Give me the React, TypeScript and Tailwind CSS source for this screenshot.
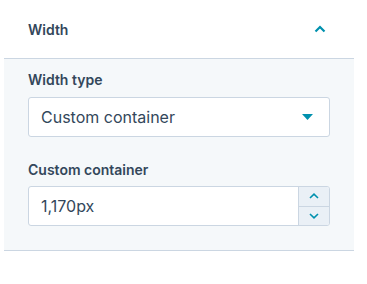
export default function App() {
  return (
    <div className="min-h-screen bg-white pl-1 text-[#33475b]" style={{ fontFamily: 'Inter, "Open Sans", sans-serif' }}>
      <div className="w-[350px]">
        {/* Header */}
        <div className="flex h-[59px] items-center justify-between border-b border-[#cbd6e2] pl-6 pr-[28px]">
          <span className="text-[14px] font-semibold">Width</span>
          <svg width="12" height="8" viewBox="0 0 12 8" className="text-[#0091ae]">
            <path d="M1.5 6.5 L6 2 L10.5 6.5" fill="none" stroke="currentColor" strokeWidth="2.2" />
          </svg>
        </div>

        {/* Body */}
        <div className="border-b border-[#cbd6e2] bg-[#f5f8fa] px-6 pb-6 pt-[11px]">
          <label className="block text-[14px] font-semibold leading-5">Width type</label>
          <div className="mt-[7px] flex h-10 items-center justify-between rounded-[3px] border border-[#cbd6e2] bg-white pl-3 pr-4">
            <span className="text-[16px]">Custom container</span>
            <svg width="11" height="6" viewBox="0 0 11 6" className="text-[#0091ae]">
              <path d="M0 0 H11 L5.5 6 Z" fill="currentColor" />
            </svg>
          </div>

          <label className="mt-[23px] block text-[14px] font-semibold leading-5">Custom container</label>
          <div className="mt-[6px] flex h-10 overflow-hidden rounded-[3px] border border-[#cbd6e2] bg-white">
            <div className="flex flex-1 items-center pl-3 text-[16px]">1,170px</div>
            <div className="flex w-[31px] flex-col border-l border-[#cbd6e2] bg-[#eaf0f6]">
              <div className="flex flex-1 items-center justify-center border-b border-[#cbd6e2]">
                <svg width="10" height="6" viewBox="0 0 10 6" className="text-[#0091ae]">
                  <path d="M1 5 L5 1.2 L9 5" fill="none" stroke="currentColor" strokeWidth="1.6" />
                </svg>
              </div>
              <div className="flex flex-1 items-center justify-center">
                <svg width="10" height="6" viewBox="0 0 10 6" className="text-[#0091ae]">
                  <path d="M1 1 L5 4.8 L9 1" fill="none" stroke="currentColor" strokeWidth="1.6" />
                </svg>
              </div>
            </div>
          </div>
        </div>
      </div>
    </div>
  )
}
